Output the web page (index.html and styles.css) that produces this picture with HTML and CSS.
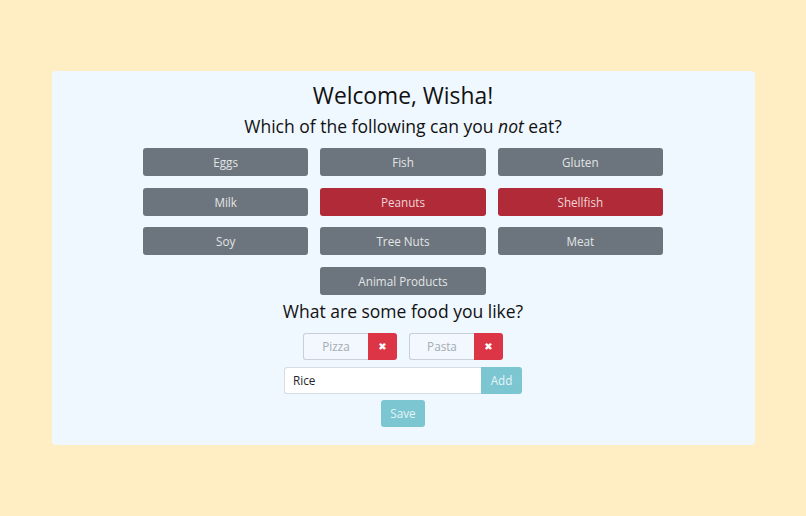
FILE: index.html
```html
<!DOCTYPE html>
<html>
<head>
<meta charset="utf-8">
<link rel="stylesheet" href="styles.css">
</head>
<body>
<div class="page">
  <div class="card">
    <h1 class="title">Welcome, Wisha!</h1>
    <h2 class="subtitle">Which of the following can you <em>not</em> eat?</h2>
    <div class="grid">
      <button class="opt">Eggs</button>
      <button class="opt">Fish</button>
      <button class="opt">Gluten</button>
      <button class="opt">Milk</button>
      <button class="opt on">Peanuts</button>
      <button class="opt on">Shellfish</button>
      <button class="opt">Soy</button>
      <button class="opt">Tree Nuts</button>
      <button class="opt">Meat</button>
      <button class="opt mid">Animal Products</button>
    </div>
    <h2 class="subtitle second">What are some food you like?</h2>
    <div class="tags">
      <div class="tag"><span class="tag-text">Pizza</span><span class="tag-x">&#10006;</span></div>
      <div class="tag"><span class="tag-text">Pasta</span><span class="tag-x">&#10006;</span></div>
    </div>
    <div class="addrow">
      <div class="field">Rice</div>
      <button class="info add">Add</button>
    </div>
    <button class="info save">Save</button>
  </div>
</div>
</body>
</html>
```

FILE: styles.css
```css
* { box-sizing: border-box; }
html, body { margin: 0; padding: 0; }
body {
  background: #ffedc4;
  font-family: "Open Sans", "Noto Sans", sans-serif;
  color: #212529;
}
.page {
  height: 516px;
  display: flex;
  align-items: center;
  justify-content: center;
}
.card {
  width: 703px;
  height: 374px;
  background: #eff7ff;
  border-radius: 4px;
  padding-top: 11px;
  display: flex;
  flex-direction: column;
  align-items: center;
}
.title {
  margin: 0;
  font-size: 22.8px;
  line-height: 28px;
  font-weight: 400;
  color: #111;
}
.subtitle {
  margin: 5px 0 0;
  font-size: 17.5px;
  line-height: 23px;
  font-weight: 400;
  color: #111;
}
.subtitle em { font-style: italic; }
.subtitle.second { margin-top: 5px; }
.grid {
  margin-top: 10px;
  width: 520px;
  display: grid;
  grid-template-columns: repeat(3, 1fr);
  column-gap: 12px;
  row-gap: 11.5px;
}
.opt {
  height: 28px;
  border: none;
  border-radius: 3px;
  background: #6c757d;
  color: #e2e4e6;
  font-family: inherit;
  font-size: 11.7px;
  padding: 0;
}
.opt.on { background: #b02a37; color: #f0d4d7; }
.opt.mid { grid-column: 2; }
.tags {
  margin-top: 10px;
  display: flex;
  gap: 12px;
}
.tag {
  display: flex;
  height: 27px;
}
.tag-text {
  width: 65px;
  border: 1px solid #c9d0d8;
  border-right: none;
  border-radius: 3px 0 0 3px;
  background: #f2f8fd;
  color: #a4abb3;
  font-size: 11.7px;
  display: flex;
  align-items: center;
  justify-content: center;
}
.tag-x {
  width: 29px;
  background: #dc3545;
  color: #fff;
  border-radius: 0 3px 3px 0;
  font-size: 10px;
  font-family: "DejaVu Sans", sans-serif;
  display: flex;
  align-items: center;
  justify-content: center;
}
.addrow {
  margin-top: 7px;
  display: flex;
  height: 27px;
}
.field {
  width: 197px;
  background: #fff;
  border: 1px solid #d7dde3;
  border-right: none;
  border-radius: 3px 0 0 3px;
  font-size: 11.7px;
  color: #212529;
  display: flex;
  align-items: center;
  padding-left: 8px;
}
.info {
  border: none;
  background: #7cc6d2;
  color: #e4f4f7;
  font-family: inherit;
  font-size: 11.7px;
  padding: 0;
}
.add {
  width: 41px;
  border-radius: 0 3px 3px 0;
}
.save {
  margin-top: 6px;
  width: 44px;
  height: 27px;
  border-radius: 3px;
}
```
